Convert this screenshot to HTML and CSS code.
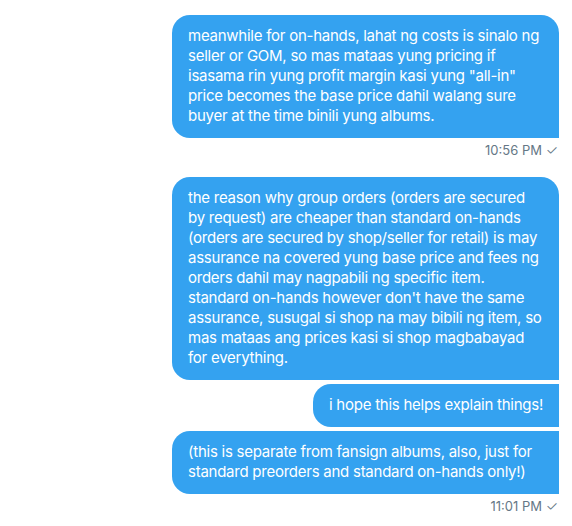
FILE: index.html
```html
<!DOCTYPE html>
<html lang="en">
<head>
    <meta charset="UTF-8">
    <meta name="viewport" content="width=device-width, initial-scale=1.0">
    <title>Messages</title>
    <link rel="stylesheet" href="styles.css">
</head>
<body>
    <div class="conversation">
        <div class="group">
            <div class="bubble single">meanwhile for on-hands, lahat ng costs is sinalo ng seller or GOM, so mas mataas yung pricing if isasama rin yung profit margin kasi yung "all-in" price becomes the base price dahil walang sure buyer at the time binili yung albums.</div>
            <div class="meta">10:56 PM <span class="check">&#10003;</span></div>
        </div>
        <div class="group">
            <div class="bubble first">the reason why group orders (orders are secured by request) are cheaper than standard on-hands (orders are secured by shop/seller for retail) is may assurance na covered yung base price and fees ng orders dahil may nagpabili ng specific item. standard on-hands however don't have the same assurance, susugal si shop na may bibili ng item, so mas mataas ang prices kasi si shop magbabayad for everything.</div>
            <div class="bubble middle">i hope this helps explain things!</div>
            <div class="bubble last">(this is separate from fansign albums, also, just for standard preorders and standard on-hands only!)</div>
            <div class="meta">11:01 PM <span class="check">&#10003;</span></div>
        </div>
    </div>
</body>
</html>
```

FILE: styles.css
```css
body {
    margin: 0;
    padding: 0;
    background-color: #fff;
    font-family: Inter, "Noto Sans", sans-serif;
}
.conversation {
    display: flex;
    flex-direction: column;
    align-items: flex-end;
    padding: 15px 13px 0 0;
}
.group {
    display: flex;
    flex-direction: column;
    align-items: flex-end;
    gap: 4px;
    margin-bottom: 19px;
}
.bubble {
    box-sizing: border-box;
    max-width: 387px;
    padding: 11px 16px 12px 16px;
    background-color: #34a2f0;
    color: #fff;
    font-size: 15px;
    line-height: 20px;
    letter-spacing: -0.25px;
    border-radius: 18px;
}
.bubble.single,
.bubble.first {
    border-bottom-right-radius: 0;
}
.bubble.middle,
.bubble.last {
    border-top-right-radius: 0;
    border-bottom-right-radius: 0;
}
.meta {
    padding-right: 1px;
    font-size: 13px;
    line-height: 16px;
    color: #657786;
}
.check {
    font-size: 14px;
    font-weight: 300;
}
```
